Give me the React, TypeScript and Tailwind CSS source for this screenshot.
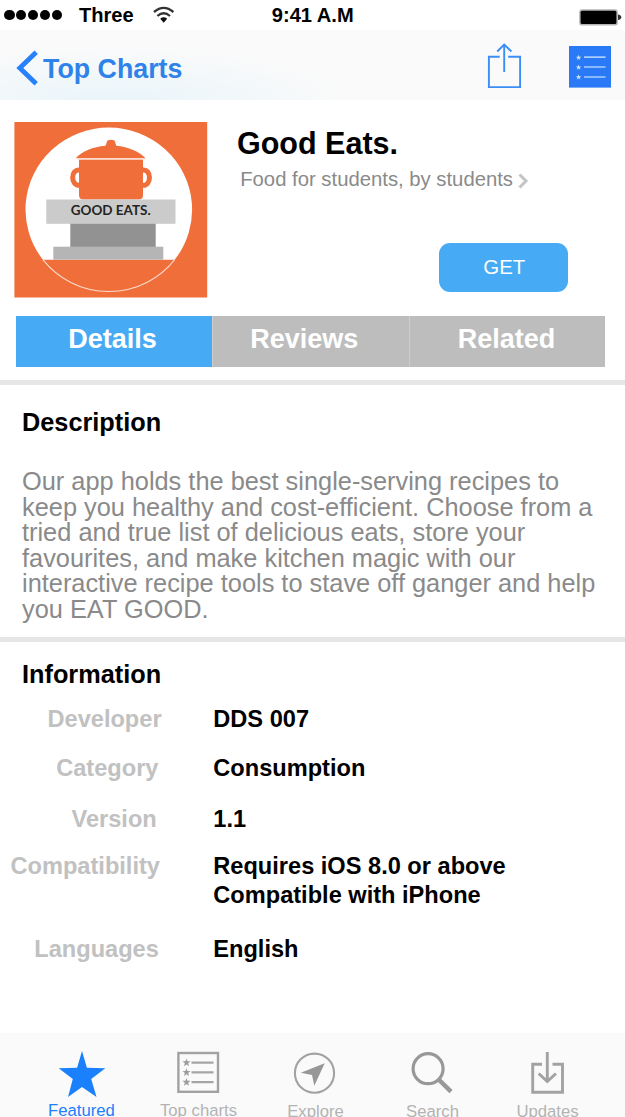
import type { ReactNode } from "react";

const STAR = "M0-5.2 1.3-1.6 5-1.6 2.1.8 3.2 4.5 0 2.3-3.2 4.5-2.1.8-5-1.6-1.3-1.6Z";

function StatusBar() {
  return (
    <div className="flex h-[30px] items-center bg-white text-[20.1px] leading-[30px] font-bold text-black">
      <div className="flex w-[79px] shrink-0 gap-[1.300px] pl-[4px]">
        {[0, 1, 2, 3, 4].map((i) => (
          <span key={i} className="size-[10.6px] rounded-full bg-black" />
        ))}
      </div>
      <span className="w-[73px] shrink-0">Three</span>
      <svg className="h-[30px] w-[24px] shrink-0" viewBox="152 0 24 30" fill="none" stroke="#333" strokeWidth="2.3">
        <path d="M154 12Q163.700 3.800 173.400 12" />
        <path d="M157.400 16Q163.700 10.400 170 16" />
        <path d="M160.200 18.700Q163.700 15.800 167.200 18.700L163.700 22.800Z" fill="#111" stroke="none" />
      </svg>
      <span className="ml-[95.800px] grow">9:41 A.M</span>
      <svg className="h-[30px] w-[47px] shrink-0" viewBox="578 0 47 30">
        <rect x="579.200" y="9.200" width="38.600" height="16.200" rx="2.500" fill="#b5b5b5" />
        <rect x="580.600" y="10.800" width="35.800" height="13.200" rx="1.500" fill="#000" />
        <path d="M618 14.500Q621.300 15 621.300 17.200T618 20Z" fill="#333" />
      </svg>
    </div>
  );
}

function NavBar() {
  return (
    <div className="flex h-[70px] items-center bg-[#fafafa] bg-[radial-gradient(ellipse_240px_60px_at_115px_76px,#e8f5fa,#fafafa00)]">
      <svg className="h-[70px] w-[43px] shrink-0" viewBox="0 30 43 70" fill="none" stroke="#2781fb" strokeWidth="4.800">
        <path d="M36.200 52.200 19.800 68 36.200 83.800" />
      </svg>
      <span className="grow pt-[7px] text-[26.800px] leading-[60px] font-bold text-[#2f82e8]">Top Charts</span>
      <svg className="h-[70px] w-[145px] shrink-0" viewBox="480 30 145 70" fill="none" stroke="#3b8ef5" strokeWidth="1.900">
        <path d="M499.700 56.700H488.900V87.100H520.100V56.700H508.200M504.200 44V72M497.200 51.500 504.200 44.500 511.400 51.500" />
        <rect x="569" y="46" width="42" height="41.600" fill="#2a7af8" stroke="none" />
        <path d="M584 57.200H605.500M584 67H605.500M584 77H605.500" stroke="#a9cbfd" strokeWidth="1.700" />
        <g fill="#cfe1ff" stroke="none">
          <path d={STAR} transform="translate(578.600 57.600) scale(.55)" />
          <path d={STAR} transform="translate(578.600 67.300) scale(.55)" />
          <path d={STAR} transform="translate(578.600 77.100) scale(.55)" />
        </g>
      </svg>
    </div>
  );
}

function AppLogo() {
  return (
    <svg className="mt-[22px] ml-[14px] h-[176px] w-[194px] shrink-0" viewBox="14 122 194 176">
      <rect x="14.400" y="121.800" width="192.800" height="175.700" fill="#ef6e3a" />
      <path d="M42.900 259.700A83.300 82 0 1 1 174.700 259.700Z" fill="#fff" />
      <path d="M42.900 259.700A83.300 82 0 0 0 174.700 259.700" fill="none" stroke="#fbd9cb" strokeWidth="1.100" />
      <g fill="#ef6e3a">
        <path d="M75.700 158.300C82 151 93 147 105.500 145.800L107.500 140.600Q111 139 114.500 140.600L116.300 145.800C128 147 140 152 145.600 158.300Z" />
        <path d="M79 159.600H143V195Q143 199.500 138.500 199.500H83.500Q79 199.500 79 195Z" />
      </g>
      <path d="M80 170C70.200 168.500 70.200 186.500 80 185.300M142.500 170C151.800 168.500 151.800 186.500 142.500 185.300" fill="none" stroke="#ef6e3a" strokeWidth="5" />
      <path d="M77 159H145" stroke="#fbd9cb" strokeWidth="1.200" />
      <rect x="46.300" y="199.500" width="129.200" height="24.300" fill="#cbcbcb" />
      <rect x="70.300" y="223.700" width="85.400" height="23.300" fill="#929292" />
      <rect x="53.300" y="246.700" width="110" height="13" fill="#b5b5b5" />
      <text x="70.700" y="214.700" textLength="80" lengthAdjust="spacingAndGlyphs" fontSize="12.500" fontWeight="700" fill="#242424" className="font-['Lato',sans-serif]">
        GOOD EATS.
      </text>
    </svg>
  );
}

function Hero() {
  return (
    <div className="flex h-[216px]">
      <AppLogo />
      <div className="flex grow flex-col pt-[23px]">
        <h1 className="pl-[29px] text-[30.500px] leading-[40px] font-bold">Good Eats.</h1>
        <div className="flex items-center pl-[32.200px] text-[20.300px] leading-[32px] text-[#8a8a8a]">
          Food for students, by students
          <svg className="ml-[5px] h-[16px] w-[12px] translate-y-[2px]" viewBox="0 0 12 16" fill="none" stroke="#c4c4c4" strokeWidth="3">
            <path d="M1.500 1.500 8 8 1.500 14.500" />
          </svg>
        </div>
        <button className="mt-[48.300px] ml-[231px] h-[49px] w-[128.500px] rounded-[11px] bg-[#46aaf4] pl-[2px] text-[20.400px] leading-[47px] text-white">GET</button>
      </div>
    </div>
  );
}

function Segments() {
  return (
    <div className="mx-[16px] flex h-[50.800px] w-[589px] text-[27px] leading-[47.500px] font-bold text-white">
      <div className="w-[196.300px] bg-[#46aaf4] pl-[52.300px]">Details</div>
      <div className="w-[196.300px] border-l border-[#cdcdcd] bg-[#bdbdbd] pl-[37px]">Reviews</div>
      <div className="w-[196.400px] border-l border-[#cdcdcd] bg-[#bdbdbd] pl-[48.200px]">Related</div>
    </div>
  );
}

function InfoRow({ label, labelClass, rowClass, children }: { label: string; labelClass: string; rowClass: string; children: ReactNode }) {
  return (
    <div className={"flex " + rowClass}>
      <dt className={"w-[213.300px] shrink-0 text-[#c1c1c1] " + labelClass}>{label}</dt>
      <dd>{children}</dd>
    </div>
  );
}

function Tab({ label, className, children }: { label: string; className: string; children: ReactNode }) {
  return (
    <div className={"flex w-[117px] shrink-0 flex-col items-center " + className}>
      <svg className="h-[66px] w-[60px] shrink-0" viewBox="-30 1033 60 66">{children}</svg>
      <span className="whitespace-nowrap">{label}</span>
    </div>
  );
}

function TabBar() {
  return (
    <nav className="-mx-px mt-auto flex h-[84px] shrink-0 bg-[#fafafa] pl-[24px] text-[16.700px] leading-[23px] text-[#b3b3b3]">
      <Tab label="Featured" className="text-[#1a80fc]">
        <path fill="#1a80fc" d="M0 1051 4.900 1067.700 23.300 1068.200 9.200 1079 14.500 1097 0 1087-14 1097-9.200 1079-23.300 1068.200-4.900 1067.700Z" />
      </Tab>
      <Tab label="Top charts" className="">
        <rect x="-20.600" y="1053" width="39.600" height="38.800" fill="none" stroke="#a2a2a2" strokeWidth="2.400" />
        <path d="M-7.500 1062.600H14.500M-7.500 1072.300H14.500M-7.500 1082.100H14.500" stroke="#a5a5a5" strokeWidth="2.200" />
        <g fill="#9c9c9c">
          <path d={STAR} transform="translate(-12.500 1062.600) scale(.8)" />
          <path d={STAR} transform="translate(-12.500 1072.300) scale(.8)" />
          <path d={STAR} transform="translate(-12.500 1082.100) scale(.8)" />
        </g>
      </Tab>
      <Tab label="Explore" className="leading-[25px]">
        <circle cx="-1.500" cy="1073.200" r="19.600" fill="none" stroke="#a2a2a2" strokeWidth="2.100" />
        <path d="M8.700 1063.200-1.700 1085.700-4 1075-15.200 1072.800Z" fill="#979797" />
      </Tab>
      <Tab label="Search" className="leading-[26px]">
        <circle cx="-4.900" cy="1068.700" r="15" fill="none" stroke="#989898" strokeWidth="3.200" />
        <path d="M6.200 1080 18 1091.700" stroke="#989898" strokeWidth="4.500" />
      </Tab>
      <Tab label="Updates" className="-ml-[2px] leading-[26px]">
        <path d="M-6 1064.200H-15.300V1092.200H14.500V1064.200H4.500M-.700 1052V1081M-9.300 1073.500-.700 1081.500 7.900 1073.500" fill="none" stroke="#a2a2a2" strokeWidth="2.900" />
      </Tab>
    </nav>
  );
}

export default function App() {
  return (
    <div className="flex h-[1117px] w-[625px] flex-col overflow-hidden bg-white font-['Liberation_Sans',Arial,sans-serif] text-black">
      <StatusBar />
      <NavBar />
      <Hero />
      <Segments />
      <section className="mt-[13.200px] border-t-[5.500px] border-[#e6e6e6]">
        <h2 className="pt-[17px] pl-[22px] text-[25.300px] leading-[40px] font-bold">Description</h2>
        <p className="mt-[27.500px] pl-[22px] text-[25.370px] leading-[25.400px] whitespace-nowrap text-[#8a8a8a]">
          Our app holds the best single-serving recipes to<br />
          keep you healthy and cost-efficient. Choose from a<br />
          tried and true list of delicious eats, store your<br />
          favourites, and make kitchen magic with our<br />
          interactive recipe tools to stave off ganger and help<br />
          you EAT GOOD.
        </p>
      </section>
      <section className="mt-[15.500px] border-t-[5.500px] border-[#e6e6e6]">
        <h2 className="pt-[12px] pl-[22px] text-[25.300px] leading-[40px] font-bold">Information</h2>
        <dl className="mt-[11px] text-[23.600px] leading-[29px] font-bold">
          <InfoRow label="Developer" labelClass="pl-[47.500px]" rowClass="">DDS 007</InfoRow>
          <InfoRow label="Category" labelClass="pl-[56.200px]" rowClass="mt-[20px]">Consumption</InfoRow>
          <InfoRow label="Version" labelClass="pl-[71.500px]" rowClass="mt-[22px]">1.1</InfoRow>
          <InfoRow label="Compatibility" labelClass="pl-[10.500px]" rowClass="mt-[18px]">Requires iOS 8.0 or above<br />Compatible with iPhone</InfoRow>
          <InfoRow label="Languages" labelClass="pl-[34.300px]" rowClass="mt-[25px]">English</InfoRow>
        </dl>
      </section>
      <TabBar />
    </div>
  );
}
